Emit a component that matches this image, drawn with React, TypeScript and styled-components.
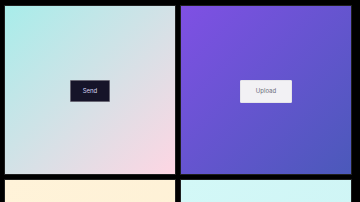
import styled, { createGlobalStyle } from 'styled-components'

const Global = createGlobalStyle`
  html, body {
    margin: 0;
    padding: 0;
    background: #000;
    font-family: Inter, 'Liberation Sans', sans-serif;
  }
`

interface Tile {
  bg: string
  label?: string
  variant?: 'dark' | 'light'
}

const tiles: Tile[] = [
  { bg: 'linear-gradient(135deg, #a8edea 0%, #fed6e3 100%)', label: 'Send', variant: 'dark' },
  { bg: 'linear-gradient(135deg, #7f50e4 0%, #4b59ba 100%)', label: 'Upload', variant: 'light' },
  { bg: 'linear-gradient(135deg, #fff3d9 0%, #fdf0d5 100%)' },
  { bg: 'linear-gradient(135deg, #d3f8f7 0%, #cdf3f4 100%)' },
]

export default function App() {
  return (
    <>
      <Global />
      <Grid>
        {tiles.map((t, i) => (
          <Card key={i} $bg={t.bg}>
            {t.label && <Button $variant={t.variant ?? 'dark'}>{t.label}</Button>}
          </Card>
        ))}
      </Grid>
    </>
  )
}

const Grid = styled.div`
  display: grid;
  grid-template-columns: 170px 170px;
  grid-auto-rows: 168px;
  gap: 6px;
  padding: 6px 9px 0 5px;
`

const Card = styled.div<{ $bg: string }>`
  background: ${p => p.$bg};
  box-shadow: 0 0 0 1px rgba(255, 255, 255, 0.12);
  display: flex;
  align-items: center;
  justify-content: center;
`

const Button = styled.button<{ $variant: 'dark' | 'light' }>`
  font-family: Inter, 'Liberation Sans', sans-serif;
  font-size: 6px;
  line-height: 1;
  border-radius: 1px;
  cursor: pointer;
  margin-top: 2px;
  ${p =>
    p.$variant === 'dark'
      ? `
    height: 22px;
    padding: 0 12px;
    background: #161429;
    color: #d6d5f2;
    border: 1px solid rgba(255, 255, 255, 0.35);
  `
      : `
    height: 23px;
    padding: 0 15px;
    background: #f2f1f4;
    color: #6a6d7a;
    border: 1px solid #e6e5ea;
  `}
`
